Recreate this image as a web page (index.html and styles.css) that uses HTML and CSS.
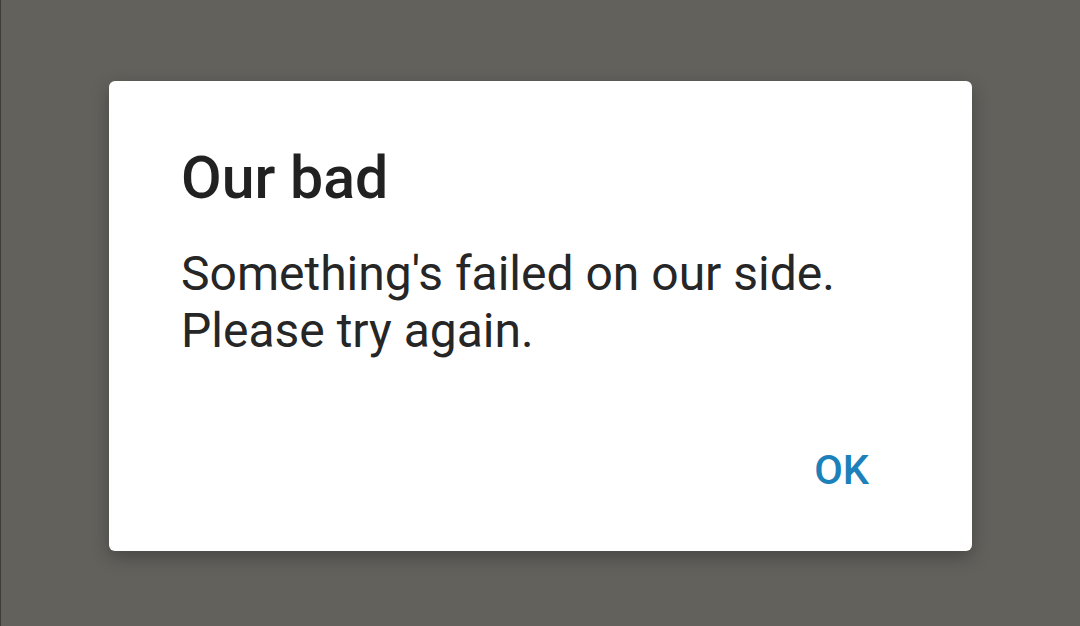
FILE: index.html
```html
<!DOCTYPE html>
<html>
<head>
<meta charset="utf-8">
<title>Our bad</title>
<link rel="stylesheet" href="styles.css">
</head>
<body>
	<div class="scrim">
		<div class="dialog">
			<h1 class="dialog-title">Our bad</h1>
			<p class="dialog-msg">Something's failed on our side.<br>Please try again.</p>
			<div class="dialog-actions">
				<button class="btn-text">OK</button>
			</div>
		</div>
	</div>
</body>
</html>
```
FILE: styles.css
```css
html, body{
	margin:0;
	height:100%;
}
body{
	background:#62615c;
	font-family:Roboto, "Noto Sans", sans-serif;
	overflow:hidden;
}
.scrim{
	height:100%;
	box-sizing:border-box;
	border-left:1px solid #3e3d3a;
	display:flex;
	justify-content:center;
	align-items:flex-start;
	padding-top:81px;
}
.dialog{
	width:863px;
	height:470px;
	box-sizing:border-box;
	background:#fff;
	border-radius:6px;
	box-shadow:0 6px 18px rgba(0,0,0,.28);
	padding:63px 103px 0 72px;
	display:flex;
	flex-direction:column;
}
.dialog-title{
	margin:0;
	font-size:59px;
	line-height:68px;
	font-weight:500;
	color:#212121;
}
.dialog-msg{
	margin:33px 0 0;
	font-size:48px;
	line-height:57px;
	color:#262626;
}
.dialog-actions{
	margin-top:87px;
	display:flex;
	justify-content:flex-end;
}
.btn-text{
	border:0;
	background:none;
	padding:0;
	font-family:inherit;
	font-size:41.5px;
	line-height:48px;
	font-weight:500;
	color:#1c80ba;
}
```
